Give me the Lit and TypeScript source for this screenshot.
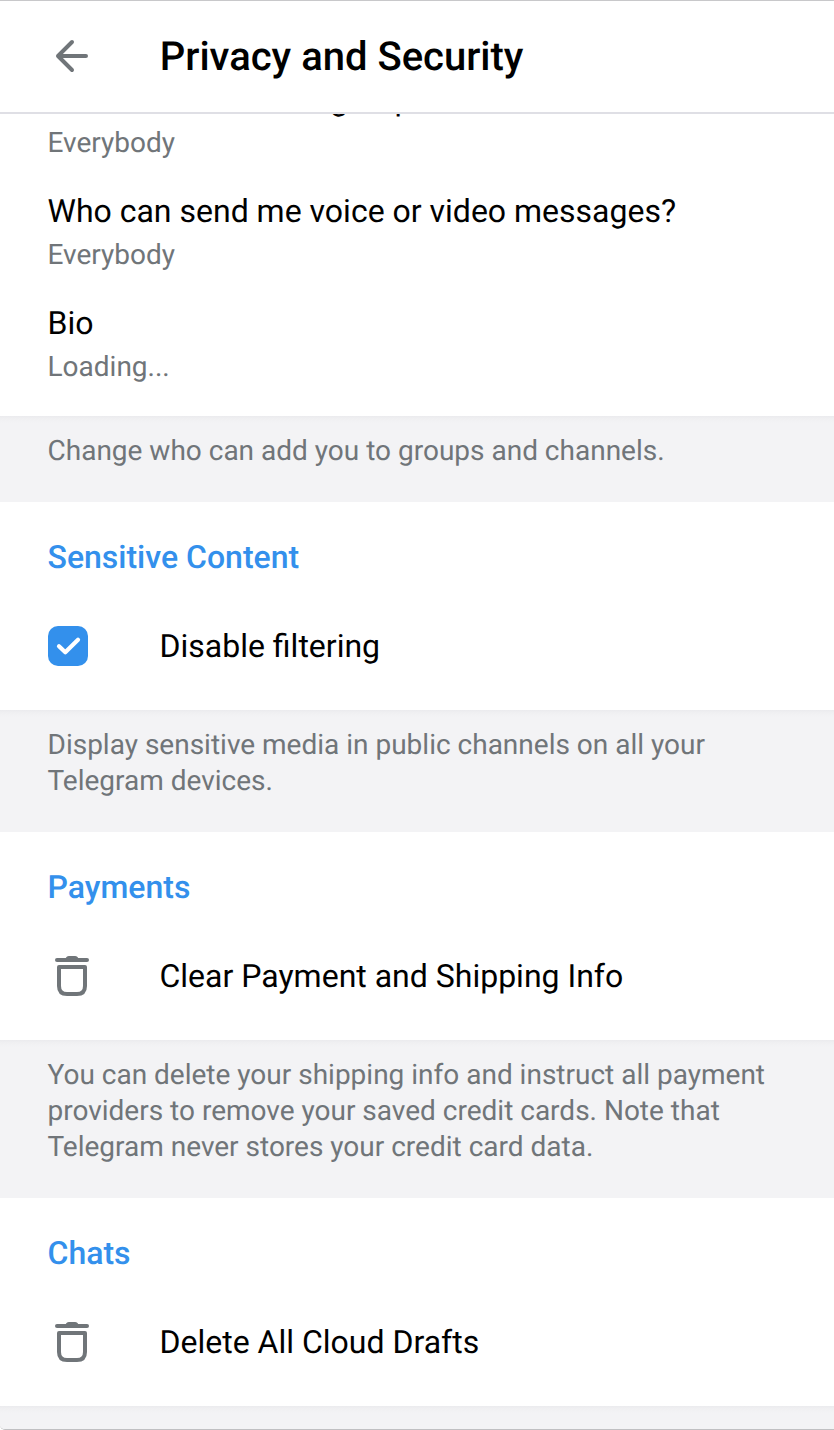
import { LitElement, html, css, svg } from "lit";
import { customElement, property } from "lit/decorators.js";

const trashIcon = svg`
  <path d="M17 18H47" stroke-width="4" />
  <path d="M25 18 Q26 14 29 14 H35 Q38 14 39 18 Z" class="fill" />
  <path d="M19 25 H45 V44 Q45 52 37 52 H27 Q19 52 19 44 Z" stroke-width="4" stroke-linejoin="round" />`;

@customElement("settings-section")
export class SettingsSection extends LitElement {
  @property() heading = "";
  @property() label = "";
  @property() icon = "trash";

  static styles = css`
    :host { display: block; height: 208px; background: #fff; box-sizing: border-box; padding: 33px 48px 0; }
    .heading { margin-left: -0.5px; font-size: 32px; line-height: 44px; font-weight: 500; color: #3390ec; }
    .row { display: flex; align-items: center; height: 64px; margin-top: 35px; font-size: 32px; color: #000; }
    .slot { display: flex; width: 112px; height: 64px; align-items: center; flex: none; }
    .label { margin-left: -0.5px; }
    .trash { width: 64px; height: 64px; margin: -4px 0 0 -8px; fill: none; stroke: #707579; stroke-linecap: round; }
    .trash .fill { fill: #707579; stroke: none; }
    .check { width: 40px; height: 40px; border-radius: 10px; background: #3390ec; fill: none; stroke: #fff;
      stroke-width: 4.2; stroke-linecap: round; stroke-linejoin: round; }
  `;

  render() {
    return html`
      <div class="heading">${this.heading}</div>
      <div class="row">
        <span class="slot">
          ${this.icon === "check"
            ? html`<svg class="check" viewBox="0 0 40 40"><path d="M11 20.3 L17.3 26.3 L30 13.7" /></svg>`
            : html`<svg class="trash" viewBox="0 0 64 64">${trashIcon}</svg>`}
        </span>
        <span class="label">${this.label}</span>
      </div>`;
  }
}

@customElement("app-root")
export class AppRoot extends LitElement {
  static styles = css`
    :host { display: flex; flex-direction: column; height: 1430px; box-sizing: border-box; overflow: hidden;
      font-family: Roboto, sans-serif; text-rendering: geometricPrecision; background: #f3f3f5;
      border-top: 1px solid #c8c8ca; border-bottom: 1px solid #c0c0c2; border-bottom-left-radius: 5px; }
    header { display: flex; align-items: center; flex: none; height: 113px; box-sizing: border-box; background: #fff;
      border-bottom: 2px solid #dfdfe5; padding-left: 48px; }
    header svg { width: 48px; height: 48px; margin: -1px 64px 0 0; fill: none; stroke: #707579; stroke-width: 4;
      stroke-linecap: round; stroke-linejoin: round; }
    h1 { margin: 1px 0 0 -0.25px; font-size: 40px; line-height: 52px; font-weight: 500; color: #000; }
    main { flex: 1; min-height: 0; overflow: hidden; }
    .rows { background: #fff; padding: 0 47.5px 31px; height: 302px; box-sizing: border-box; overflow: hidden;
      display: flex; flex-direction: column; justify-content: flex-end; gap: 28px; }
    .title { font-size: 32px; line-height: 44px; color: #000; white-space: nowrap; }
    .sub { font-size: 28px; line-height: 36px; margin-top: 4px; color: #707579; }
    .info { padding: 17px 47.5px 33px; font-size: 28px; line-height: 36px; color: #707579;
      background: linear-gradient(#ebebee, #f0f0f2 3px, #f3f3f5 7px); }
    .end { height: 23px; padding: 0; }
  `;

  render() {
    const rows = [
      ["Who can add me to group chats?", "Everybody"],
      ["Who can send me voice or video messages?", "Everybody"],
      ["Bio", "Loading..."],
    ];
    return html`
      <header>
        <svg viewBox="0 0 48 48"><path d="M38 24H10M24 10L10 24L24 38" /></svg>
        <h1>Privacy and Security</h1>
      </header>
      <main>
        <div class="rows">
          ${rows.map(([t, s]) => html`<div><div class="title">${t}</div><div class="sub">${s}</div></div>`)}
        </div>
        <div class="info">Change who can add you to groups and channels.</div>
        <settings-section heading="Sensitive Content" label="Disable filtering" icon="check"></settings-section>
        <div class="info">Display sensitive media in public channels on all your<br />Telegram devices.</div>
        <settings-section heading="Payments" label="Clear Payment and Shipping Info"></settings-section>
        <div class="info">You can delete your shipping info and instruct all payment<br />providers to remove your saved credit cards. Note that<br />Telegram never stores your credit card data.</div>
        <settings-section heading="Chats" label="Delete All Cloud Drafts"></settings-section>
        <div class="info end"></div>
      </main>`;
  }
}
